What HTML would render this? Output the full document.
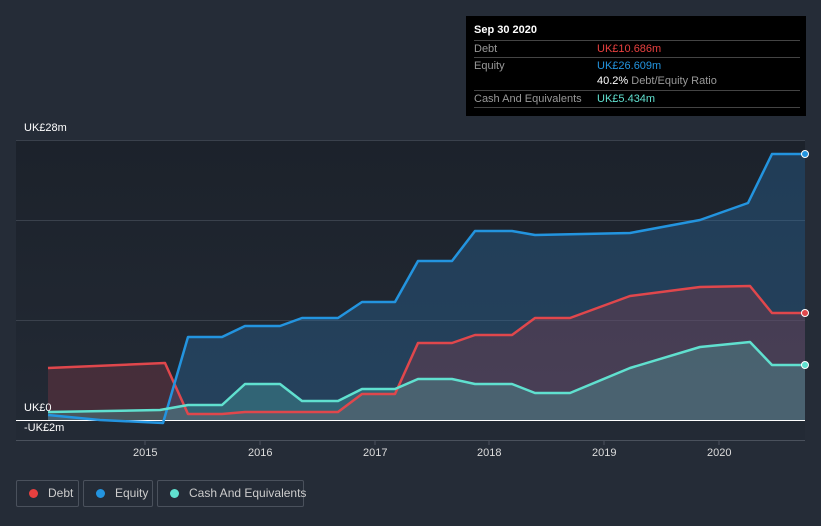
<!DOCTYPE html>
<html><head><meta charset="utf-8"><style>
body{margin:0;width:821px;height:526px;background:#252c37;font-family:"Liberation Sans",sans-serif;overflow:hidden;position:relative}
.t{position:absolute;color:#fff;font-size:11px}
.tip{position:absolute;left:466px;top:16px;width:340px;height:100px;background:#000;}
.tip .r{position:absolute;left:8px;right:6px;border-top:1px solid #444;height:16px;font-size:11px;color:#999;line-height:16px}
.leg{position:absolute;top:480px;height:27px;border:1px solid #4a515c;border-radius:2px;color:#ccc;font-size:12px;line-height:25px;box-sizing:border-box;white-space:nowrap}
.leg i{display:inline-block;width:9px;height:9px;border-radius:50%;margin:0 10px 0 12px;vertical-align:-1px}
</style></head><body>
<svg width="821" height="526" style="position:absolute;left:0;top:0">
<defs><linearGradient id="bg" x1="0" y1="0" x2="0" y2="1"><stop offset="0" stop-color="#1c222b"/><stop offset="1" stop-color="#232a35"/></linearGradient></defs>
<rect x="16" y="140" width="789" height="300" fill="url(#bg)"/>
<g stroke="#3a414c" stroke-width="1"><line x1="16" y1="140.5" x2="805" y2="140.5"/><line x1="16" y1="220.5" x2="805" y2="220.5"/><line x1="16" y1="320.5" x2="805" y2="320.5"/><line x1="16" y1="440.5" x2="805" y2="440.5" stroke="#4a515c"/></g>
<g stroke="#4a515c"><line x1="145" y1="441" x2="145" y2="445"/><line x1="260" y1="441" x2="260" y2="445"/><line x1="375" y1="441" x2="375" y2="445"/><line x1="489" y1="441" x2="489" y2="445"/><line x1="604" y1="441" x2="604" y2="445"/><line x1="719" y1="441" x2="719" y2="445"/></g>
<path d="M48,415 L100,420 163,423 188,337 222,337 245,326 280,326 302,318 338,318 362,302 395,302 418,261 452,261 475,231 512,231 535,235 630,233 700,220 748,203 772,154 805,154 L805,420 48,420Z" fill="#2a6fa8" fill-opacity="0.35"/>
<path d="M48,368 L165,363 188,414 222,414 245,412 338,412 362,394 395,394 418,343 452,343 475,335 512,335 535,318 570,318 630,296 700,287 750,286 772,313 805,313 L805,420 48,420Z" fill="#8a3a48" fill-opacity="0.35"/>
<path d="M48,412 L160,410 188,405 222,405 245,384 280,384 302,401 338,401 362,389 395,389 418,379 452,379 475,384 512,384 535,393 570,393 630,368 700,347 750,342 772,365 805,365 L805,420 48,420Z" fill="#4fb7ae" fill-opacity="0.3"/>
<line x1="16" y1="420.5" x2="805" y2="420.5" stroke="#fff" stroke-width="1"/>
<g fill="none" stroke-width="2.5" stroke-linejoin="round">
<path d="M48,368 L165,363 188,414 222,414 245,412 338,412 362,394 395,394 418,343 452,343 475,335 512,335 535,318 570,318 630,296 700,287 750,286 772,313 805,313" stroke="#e0474c"/>
<path d="M48,415 L100,420 163,423 188,337 222,337 245,326 280,326 302,318 338,318 362,302 395,302 418,261 452,261 475,231 512,231 535,235 630,233 700,220 748,203 772,154 805,154" stroke="#2394df"/>
<path d="M48,412 L160,410 188,405 222,405 245,384 280,384 302,401 338,401 362,389 395,389 418,379 452,379 475,384 512,384 535,393 570,393 630,368 700,347 750,342 772,365 805,365" stroke="#60e0cf"/>
</g>
<circle cx="805" cy="154" r="3.5" fill="#2394df" stroke="#fff"/><circle cx="805" cy="313" r="3.5" fill="#e0474c" stroke="#fff"/><circle cx="805" cy="365" r="3.5" fill="#60e0cf" stroke="#fff"/>
</svg>
<div class="t" style="left:24px;top:122px">UK£28m</div>
<div class="t" style="left:24px;top:402px">UK£0</div>
<div class="t" style="left:24px;top:422px">-UK£2m</div>
<div class="t" style="left:133px;top:447px;color:#ddd">2015</div>
<div class="t" style="left:248px;top:447px;color:#ddd">2016</div>
<div class="t" style="left:363px;top:447px;color:#ddd">2017</div>
<div class="t" style="left:477px;top:447px;color:#ddd">2018</div>
<div class="t" style="left:592px;top:447px;color:#ddd">2019</div>
<div class="t" style="left:707px;top:447px;color:#ddd">2020</div>
<div class="tip">
<div style="position:absolute;left:8px;top:8px;color:#fff;font-weight:bold;font-size:11px">Sep 30 2020</div>
<div class="r" style="top:24px">Debt<span style="position:absolute;left:123px;color:#e8403f">UK£10.686m</span></div>
<div class="r" style="top:41px">Equity<span style="position:absolute;left:123px;color:#2394df">UK£26.609m</span></div>
<div class="r" style="top:57px;border:none"><span style="position:absolute;left:123px;color:#fff">40.2% <span style="color:#999">Debt/Equity Ratio</span></span></div>
<div class="r" style="top:74px">Cash And Equivalents<span style="position:absolute;left:123px;color:#60e0cf">UK£5.434m</span></div>
<div class="r" style="top:91px;height:0"></div>
</div>
<div class="leg" style="left:16px;width:63px"><i style="background:#e8403f"></i>Debt</div>
<div class="leg" style="left:83px;width:70px"><i style="background:#2394df"></i>Equity</div>
<div class="leg" style="left:157px;width:147px"><i style="background:#60e0cf"></i>Cash And Equivalents</div>
</body></html>
